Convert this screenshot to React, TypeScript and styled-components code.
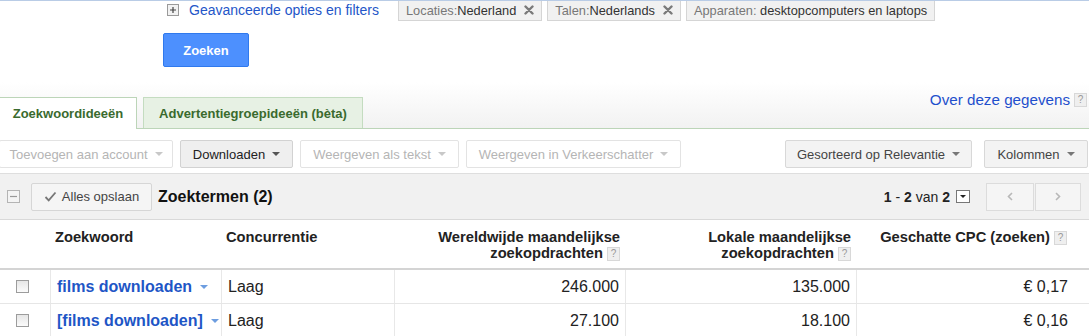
import React from 'react'
import styled, { createGlobalStyle } from 'styled-components'

const GlobalStyle = createGlobalStyle`
  html, body { margin: 0; padding: 0; background: #fff; }
  body { font-family: "Liberation Sans", Arial, sans-serif; color: #222; }
  * { box-sizing: border-box; }
`

const Page = styled.div`
  width: 1089px;
  height: 336px;
  overflow: hidden;
  border-top: 1px solid #b9cce6;
`

/* ---------- filters ---------- */

const FilterRow = styled.div`
  display: flex;
  align-items: flex-start;
  height: 20px;
  padding-left: 167px;
`

const Advanced = styled.a`
  display: flex;
  align-items: center;
  gap: 10px;
  width: 231px;
  margin-top: 1px;
  font-size: 14px;
  line-height: 16px;
  color: #2456c8;
  text-decoration: none;
  white-space: nowrap;
`

const Chip = styled.span`
  display: inline-flex;
  align-items: center;
  gap: 8px;
  height: 20px;
  padding: 0 7px 1px 7px;
  margin-right: 5px;
  background: #f1f1f1;
  border: 1px solid #d5d5d5;
  border-top: none;
  font-size: 12.8px;
  color: #333;
  white-space: nowrap;
`

const ChipLabel = styled.span`
  color: #777;
`

const SearchButton = styled.button`
  display: block;
  margin: 12px 0 0 163px;
  width: 86px;
  height: 34px;
  background: #4d90fe;
  border: 1px solid #3079ed;
  border-radius: 2px;
  color: #fff;
  font-family: inherit;
  font-weight: bold;
  font-size: 13px;
`

/* ---------- tabs ---------- */

const TabArea = styled.div`
  display: flex;
  align-items: flex-end;
  height: 62px;
  background: linear-gradient(#fff 0%, #fff 25%, #f2f2f2 100%);
  border-bottom: 1px solid #bcd5b8;
`

const Tab = styled.div<{ $active?: boolean }>`
  display: flex;
  align-items: center;
  justify-content: center;
  height: ${p => (p.$active ? '32px' : '31px')};
  width: ${p => (p.$active ? '137px' : '220px')};
  margin-left: ${p => (p.$active ? '0' : '6px')};
  margin-bottom: ${p => (p.$active ? '-1px' : '0')};
  background: ${p => (p.$active ? '#fff' : '#e7f1e4')};
  border: 1px solid ${p => (p.$active ? '#bcd5b8' : '#c4dcc0')};
  border-left-width: ${p => (p.$active ? '0' : '1px')};
  border-bottom: none;
  font-size: 13px;
  font-weight: bold;
  color: #3a6a2e;
  white-space: nowrap;
`

const AboutLink = styled.a`
  display: flex;
  align-items: center;
  gap: 4px;
  align-self: flex-start;
  margin: 24px 2px 0 auto;
  font-size: 15.2px;
  line-height: 17px;
  color: #1f4fcc;
  text-decoration: none;
`

const Help = styled.span`
  display: inline-flex;
  align-items: center;
  justify-content: center;
  width: 13px;
  height: 14px;
  background: #efefef;
  border: 1px solid #d8d8d8;
  font-size: 10px;
  font-weight: normal;
  color: #999;
  line-height: 1;
  vertical-align: middle;
`

/* ---------- toolbar ---------- */

const Toolbar = styled.div`
  display: flex;
  align-items: flex-start;
  height: 45px;
  padding-top: 11px;
  border-bottom: 1px solid #dedede;
`

const ToolGroup = styled.div<{ $right?: boolean }>`
  display: flex;
  gap: ${p => (p.$right ? '12px' : '7px')};
  margin-left: ${p => (p.$right ? 'auto' : '-1px')};
  margin-right: ${p => (p.$right ? '1px' : '0')};
`

type Variant = 'disabled' | 'active' | 'plain'

const toolColors: Record<Variant, { bg: string; border: string; color: string; caret: string }> = {
  disabled: { bg: '#fff', border: '#e3e3e3', color: '#b5b5b5', caret: '#c8c8c8' },
  active: { bg: '#efefef', border: '#d2d2d2', color: '#222', caret: '#555' },
  plain: { bg: '#f3f3f3', border: '#d8d8d8', color: '#444', caret: '#777' },
}

const ToolButton = styled.div<{ $w: number; $v: Variant }>`
  display: flex;
  align-items: center;
  justify-content: center;
  gap: 7px;
  width: ${p => p.$w}px;
  height: 28px;
  background: ${p => toolColors[p.$v].bg};
  border: 1px solid ${p => toolColors[p.$v].border};
  border-radius: 2px;
  font-size: 13px;
  color: ${p => toolColors[p.$v].color};
  white-space: nowrap;
`

const Caret = styled.span<{ $color: string; $size?: number }>`
  display: inline-block;
  width: 0;
  height: 0;
  border-left: ${p => p.$size ?? 4}px solid transparent;
  border-right: ${p => p.$size ?? 4}px solid transparent;
  border-top: ${p => p.$size ?? 4}px solid ${p => p.$color};
`

/* ---------- grid bar ---------- */

const GridBar = styled.div`
  display: flex;
  align-items: center;
  height: 46px;
  padding-left: 7px;
  background: #f1f1f1;
  border-bottom: 1px solid #d9d9d9;
`

const SaveButton = styled.div`
  display: flex;
  align-items: center;
  justify-content: center;
  gap: 5px;
  width: 121px;
  height: 28px;
  margin-left: 11px;
  background: #f5f5f5;
  border: 1px solid #d6d6d6;
  border-radius: 2px;
  font-size: 13px;
  color: #444;
`

const GridTitle = styled.span`
  margin-left: 6px;
  font-size: 16px;
  font-weight: bold;
  color: #111;
`

const Pager = styled.div`
  display: flex;
  align-items: center;
  margin-left: auto;
  margin-right: 8px;
  font-size: 14px;
  color: #222;
`

const PageSelect = styled.span`
  display: inline-flex;
  align-items: center;
  justify-content: center;
  width: 14px;
  height: 13px;
  margin-left: 6px;
  background: #fff;
  border: 1px solid #777;
`

const NavGroup = styled.div`
  display: flex;
  margin-left: 16px;
`

const NavButton = styled.div<{ $w: number }>`
  display: flex;
  align-items: center;
  justify-content: center;
  width: ${p => p.$w}px;
  height: 28px;
  background: #f5f5f5;
  border: 1px solid #dcdcdc;
  & + & {
    margin-left: 1px;
  }
`

/* ---------- table ---------- */

const Row = styled.div<{ $head?: boolean }>`
  display: grid;
  grid-template-columns: 50px 171px 173px 231px 231px 232px;
  height: ${p => (p.$head ? '50px' : '34px')};
  border-bottom: ${p => (p.$head ? '2px solid #d4d4d4' : '1px solid #e6e6e6')};
`

const HeadCell = styled.div<{ $right?: boolean; $pr?: number }>`
  padding: 9px ${p => p.$pr ?? 5}px 0 ${p => (p.$right ? 0 : 5)}px;
  font-size: 14.7px;
  line-height: 16px;
  font-weight: bold;
  color: #222;
  text-align: ${p => (p.$right ? 'right' : 'left')};
`

const Cell = styled.div<{ $right?: boolean; $pr?: number; $sep?: boolean; $pl?: number }>`
  display: flex;
  align-items: center;
  justify-content: ${p => (p.$right ? 'flex-end' : 'flex-start')};
  padding: 0 ${p => p.$pr ?? 6}px 0 ${p => p.$pl ?? 6}px;
  border-left: ${p => (p.$sep ? '1px solid #e8e8e8' : 'none')};
  font-size: 16px;
  color: #222;
  white-space: nowrap;
`

const CheckBox = styled.span`
  display: inline-block;
  width: 13px;
  height: 13px;
  border: 1px solid #9c9c9c;
  background: linear-gradient(#e6e6e6, #fbfbfb);
`

const KeywordLink = styled.a`
  display: inline-flex;
  align-items: center;
  gap: 8px;
  font-weight: bold;
  color: #1e56c6;
  text-decoration: none;
`

/* ---------- icons ---------- */

const PlusIcon = () => (
  <svg width="12" height="12" viewBox="0 0 12 12">
    <rect x="0.5" y="0.5" width="11" height="11" fill="#f2f2f2" stroke="#9a9a9a" />
    <path d="M3 6h6M6 3v6" stroke="#444" strokeWidth="1.2" />
  </svg>
)

const MinusIcon = () => (
  <svg width="13" height="13" viewBox="0 0 13 13">
    <rect x="0.5" y="0.5" width="12" height="12" fill="#f4f4f4" stroke="#b4b4b4" />
    <path d="M3 6.5h7" stroke="#999" strokeWidth="1.2" />
  </svg>
)

const CloseIcon = () => (
  <svg width="10" height="10" viewBox="0 0 10 10">
    <path d="M1.5 1.5l7 7M8.5 1.5l-7 7" stroke="#7a7a7a" strokeWidth="2.4" strokeLinecap="round" />
  </svg>
)

const CheckIcon = () => (
  <svg width="13" height="11" viewBox="0 0 13 11">
    <path d="M1.5 6l3.2 3.3L11.5 1.5" fill="none" stroke="#777" strokeWidth="1.8" />
  </svg>
)

const Chevron = ({ dir }: { dir: 'left' | 'right' }) => (
  <svg width="6" height="9" viewBox="0 0 6 9">
    <path
      d={dir === 'left' ? 'M5 1L1.5 4.5L5 8' : 'M1 1l3.5 3.5L1 8'}
      fill="none"
      stroke="#b8b8b8"
      strokeWidth="1.6"
    />
  </svg>
)

const chips = [
  { label: 'Locaties:', value: 'Nederland', close: true },
  { label: 'Talen:', value: 'Nederlands', close: true },
  { label: 'Apparaten: ', value: 'desktopcomputers en laptops', close: false },
]

const rows = [
  { keyword: 'films downloaden', comp: 'Laag', global: '246.000', local: '135.000', cpc: '€ 0,17' },
  { keyword: '[films downloaden]', comp: 'Laag', global: '27.100', local: '18.100', cpc: '€ 0,16' },
]

export default function App() {
  return (
    <Page>
      <GlobalStyle />
      <FilterRow>
        <Advanced href="#">
          <PlusIcon />
          Geavanceerde opties en filters
        </Advanced>
        {chips.map(c => (
          <Chip key={c.label}>
            <span>
              <ChipLabel>{c.label}</ChipLabel>
              {c.value}
            </span>
            {c.close && <CloseIcon />}
          </Chip>
        ))}
      </FilterRow>

      <SearchButton>Zoeken</SearchButton>

      <TabArea>
        <Tab $active>Zoekwoordideeën</Tab>
        <Tab>Advertentiegroepideeën (bèta)</Tab>
        <AboutLink href="#">
          Over deze gegevens <Help>?</Help>
        </AboutLink>
      </TabArea>

      <Toolbar>
        <ToolGroup>
          <ToolButton $w={174} $v="disabled">
            Toevoegen aan account <Caret $color={toolColors.disabled.caret} />
          </ToolButton>
          <ToolButton $w={113} $v="active">
            Downloaden <Caret $color={toolColors.active.caret} />
          </ToolButton>
          <ToolButton $w={159} $v="disabled">
            Weergeven als tekst <Caret $color={toolColors.disabled.caret} />
          </ToolButton>
          <ToolButton $w={215} $v="disabled">
            Weergeven in Verkeerschatter <Caret $color={toolColors.disabled.caret} />
          </ToolButton>
        </ToolGroup>
        <ToolGroup $right>
          <ToolButton $w={187} $v="plain">
            Gesorteerd op Relevantie <Caret $color={toolColors.plain.caret} />
          </ToolButton>
          <ToolButton $w={104} $v="plain">
            Kolommen <Caret $color={toolColors.plain.caret} />
          </ToolButton>
        </ToolGroup>
      </Toolbar>

      <GridBar>
        <MinusIcon />
        <SaveButton>
          <CheckIcon />
          Alles opslaan
        </SaveButton>
        <GridTitle>Zoektermen (2)</GridTitle>
        <Pager>
          <b>1</b>&nbsp;-&nbsp;<b>2</b>&nbsp;van&nbsp;<b>2</b>
          <PageSelect>
            <Caret $color="#222" $size={3.5} />
          </PageSelect>
          <NavGroup>
            <NavButton $w={48}>
              <Chevron dir="left" />
            </NavButton>
            <NavButton $w={46}>
              <Chevron dir="right" />
            </NavButton>
          </NavGroup>
        </Pager>
      </GridBar>

      <Row $head>
        <div />
        <HeadCell>Zoekwoord</HeadCell>
        <HeadCell>Concurrentie</HeadCell>
        <HeadCell $right>
          Wereldwijde maandelijkse
          <br />
          zoekopdrachten <Help>?</Help>
        </HeadCell>
        <HeadCell $right>
          Lokale maandelijkse
          <br />
          zoekopdrachten <Help>?</Help>
        </HeadCell>
        <HeadCell $right $pr={21}>
          Geschatte CPC (zoeken) <Help>?</Help>
        </HeadCell>
      </Row>

      {rows.map(r => (
        <Row key={r.keyword}>
          <Cell $pl={16}>
            <CheckBox />
          </Cell>
          <Cell $sep $pl={6}>
            <KeywordLink href="#">
              {r.keyword}
              <Caret $color="#6d9de0" />
            </KeywordLink>
          </Cell>
          <Cell $sep>{r.comp}</Cell>
          <Cell $sep $right>
            {r.global}
          </Cell>
          <Cell $sep $right>
            {r.local}
          </Cell>
          <Cell $sep $right $pr={20}>
            {r.cpc}
          </Cell>
        </Row>
      ))}
    </Page>
  )
}
